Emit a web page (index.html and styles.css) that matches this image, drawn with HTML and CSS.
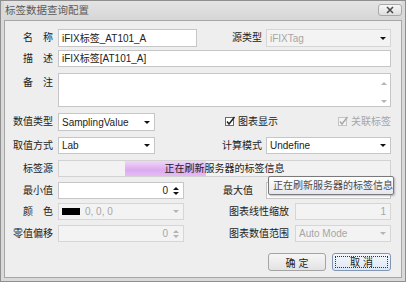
FILE: index.html
```html
<!DOCTYPE html>
<html lang="zh-CN">
<head>
  <meta charset="UTF-8" />
  <title>标签数据查询配置</title>
  <link rel="stylesheet" href="styles.css">
</head>
<body>

  <div class="window">
    <div class="titlebar">
      <span class="title">标签数据查询配置</span>
      <button class="close-btn">
        <svg width="10" height="8" viewBox="0 0 10 8"><path d="M2 1 L8 7 M8 1 L2 7" stroke="#4a4a4a" stroke-width="1.6"/></svg>
      </button>
    </div>

    <div class="client">
      <div class="form">

        <div class="row">
          <span class="lbl">名　称</span>
          <div class="field tall w-name">iFIX标签_AT101_A</div>
          <span class="rlbl">源类型</span>
          <div class="field tall combo disabled w-right">iFIXTag<i class="arrow"></i></div>
        </div>

        <div class="row">
          <span class="lbl">描　述</span>
          <div class="field grow">iFIX标签[AT101_A]</div>
        </div>

        <div class="row">
          <span class="lbl lbl-top">备　注</span>
          <div class="field memo grow">
            <div class="scroll">
              <i class="arrow up light"></i>
              <i class="arrow light"></i>
            </div>
          </div>
        </div>

        <div class="row">
          <span class="lbl">数值类型</span>
          <div class="field tall combo w-short">SamplingValue<i class="arrow"></i></div>
          <label class="check chk-chart">
            <svg width="11" height="11" viewBox="0 0 11 11"><rect x="0.5" y="1.5" width="8" height="8" fill="#fff" stroke="#6a6a6a"/><path d="M2 5.5 L4 8 L9.5 1" fill="none" stroke="#222" stroke-width="1.4"/></svg>
            图表显示
          </label>
          <label class="check chk-link disabled">
            <svg width="11" height="11" viewBox="0 0 11 11"><rect x="0.5" y="1.5" width="8" height="8" fill="#f4f4f4" stroke="#c4c4c4"/><path d="M2 5.5 L4 8 L9.5 1" fill="none" stroke="#a8a8a8" stroke-width="1.4"/></svg>
            关联标签
          </label>
        </div>

        <div class="row">
          <span class="lbl">取值方式</span>
          <div class="field combo w-short">Lab<i class="arrow"></i></div>
          <span class="rlbl">计算模式</span>
          <div class="field combo w-right">Undefine<i class="arrow"></i></div>
        </div>

        <div class="row">
          <span class="lbl">标签源</span>
          <div class="field progress grow">
            <div class="chunk" style="left: 20%; width: 24.5%"></div>
            <span class="progress-text">正在刷新服务器的标签信息</span>
          </div>
        </div>

        <div class="row">
          <span class="lbl">最小值</span>
          <div class="field spin w-mid">
            <span class="num">0</span>
            <div class="spin-btns"><i class="arrow up"></i><i class="arrow"></i></div>
          </div>
          <span class="rlbl rlbl-max">最大值</span>
          <div class="field spin w-max">
            <div class="spin-btns"><i class="arrow up"></i><i class="arrow"></i></div>
          </div>
        </div>

        <div class="row">
          <span class="lbl">颜　色</span>
          <div class="field combo disabled w-mid">
            <span class="swatch"></span>0, 0, 0<i class="arrow light"></i>
          </div>
          <span class="rlbl rlbl-wide">图表线性缩放</span>
          <div class="field disabled num-field w-chart">1</div>
        </div>

        <div class="row">
          <span class="lbl">零值偏移</span>
          <div class="field spin disabled w-mid">
            <span class="num">0</span>
            <div class="spin-btns"><i class="arrow up light"></i><i class="arrow light"></i></div>
          </div>
          <span class="rlbl rlbl-wide">图表数值范围</span>
          <div class="field combo disabled w-chart">Auto Mode<i class="arrow light"></i></div>
        </div>

        <div class="buttons">
          <button class="btn">确 定</button>
          <button class="btn btn-focus"><span>取 消</span></button>
        </div>

      </div>
    </div>

    <div class="tooltip">正在刷新服务器的标签信息</div>
  </div>

</body>
</html>
```

FILE: styles.css
```css
* {
  box-sizing: border-box;
  margin: 0;
  padding: 0;
}

body {
  font-family: "Liberation Sans", "Noto Sans CJK SC", sans-serif;
  font-size: 10px;
  color: #222;
  background: #fff;
}

.window {
  position: relative;
  width: 406px;
  height: 282px;
  border: 1px solid #8f8f8f;
  background: #d9d9d9;
  padding: 0 3px 3px 3px;
  display: flex;
  flex-direction: column;
}

.titlebar {
  height: 19px;
  display: flex;
  align-items: center;
  justify-content: space-between;
  padding: 0 0 0 1px;
  background: linear-gradient(#e4e4e4, #d6d6d6);
}

.title {
  font-size: 10.5px;
  color: #5a5a5a;
  line-height: 19px;
}

.close-btn {
  width: 24px;
  height: 12px;
  margin-top: -2px;
  border: 1px solid #a9a9a9;
  border-radius: 3px;
  background: linear-gradient(#f7f7f7, #dedede);
  display: flex;
  align-items: center;
  justify-content: center;
}

.client {
  flex: 1;
  border: 1px solid #a6a6a6;
  background: #eeeeef;
  padding: 8px 10px 0 3px;
}

.form {
  display: grid;
  grid-template-rows: 21px 23px 40px 24px 23px 22px 21px 22px 28px auto;
}

.row {
  display: flex;
  align-items: flex-start;
}

.lbl {
  width: 45px;
  margin-right: 5px;
  text-align: right;
  line-height: 17px;
  white-space: nowrap;
}

.lbl-top {
  line-height: 20px;
}

.rlbl {
  flex: 1;
  text-align: right;
  margin-right: 4px;
  line-height: 17px;
  white-space: nowrap;
}

.rlbl-max {
  margin-right: 13px;
}

.rlbl-wide {
  margin-right: 6px;
}

/* fields */
.field {
  height: 17px;
  border: 1px solid #c6c6c6;
  background: #fff;
  display: flex;
  align-items: center;
  padding: 0 3px;
  line-height: 15px;
  white-space: nowrap;
  overflow: hidden;
}

.field.tall {
  height: 18px;
}

.field.disabled {
  background: #f3f3f3;
  border-color: #d6d6d6;
  color: #a6a6a6;
}

.grow { flex: 1; }
.w-name { width: 139px; }
.w-right { width: 125px; }
.w-short { width: 97px; }
.w-mid { width: 126px; }
.w-max { width: 125px; }
.w-chart { width: 96px; }

.arrow {
  display: block;
  width: 0;
  height: 0;
  border-left: 3px solid transparent;
  border-right: 3px solid transparent;
  border-top: 3px solid #111;
}

.arrow.up {
  border-top: 0;
  border-bottom: 3px solid #111;
}

.arrow.light { border-top-color: #b4b4b4; }
.arrow.up.light { border-bottom-color: #b4b4b4; }

.combo .arrow {
  margin-left: auto;
  margin-right: 1px;
}

.memo {
  height: 34px;
  align-items: stretch;
  justify-content: flex-end;
  padding: 0;
}

.scroll {
  width: 12px;
  display: flex;
  flex-direction: column;
  justify-content: space-between;
  align-items: center;
  padding: 8px 0 3px;
}

.check {
  display: flex;
  align-items: center;
  gap: 2px;
  line-height: 17px;
}

.check.disabled { color: #a6a6a6; }
.chk-chart { margin-left: 70px; }
.chk-link { margin-left: 60px; }

.progress {
  position: relative;
  background: #f2f2f2;
  border-color: #d2d2d2;
  justify-content: center;
}

.chunk {
  position: absolute;
  top: 0;
  bottom: 0;
  background: linear-gradient(#efd6f8, #dcaaef 60%, #e4bcf3);
}

.progress-text {
  position: relative;
  color: #222;
}

.spin {
  justify-content: flex-end;
  padding-right: 4px;
}

.num {
  margin-right: 5px;
}

.spin-btns {
  display: flex;
  flex-direction: column;
  gap: 2px;
}

.num-field {
  justify-content: flex-end;
  padding-right: 4px;
}

.swatch {
  width: 18px;
  height: 7px;
  background: #000;
  margin-right: 5px;
}

.buttons {
  display: flex;
  justify-content: flex-end;
  gap: 6px;
}

.btn {
  width: 58px;
  height: 18px;
  font-family: inherit;
  font-size: 10px;
  color: #222;
  border: 1px solid #a4a4a4;
  border-radius: 3px;
  background: linear-gradient(#f6f6f6, #e3e3e3);
}

.btn-focus {
  width: 59px;
  padding: 2px;
  border-color: #7f97b4;
  background: linear-gradient(#f3f7fc, #dde7f4);
}

.btn-focus span {
  display: block;
  height: 100%;
  line-height: 11px;
  border: 1px dotted #333;
}

.tooltip {
  position: absolute;
  left: 267px;
  top: 175px;
  width: 126px;
  height: 19px;
  padding: 0 4px;
  line-height: 17px;
  color: #4c4c4c;
  border: 1px solid #7a7a7a;
  border-radius: 2px;
  background: linear-gradient(#ffffff, #e6e7ee);
  box-shadow: 1px 1px 2px rgba(0, 0, 0, 0.25);
  white-space: nowrap;
}
```
